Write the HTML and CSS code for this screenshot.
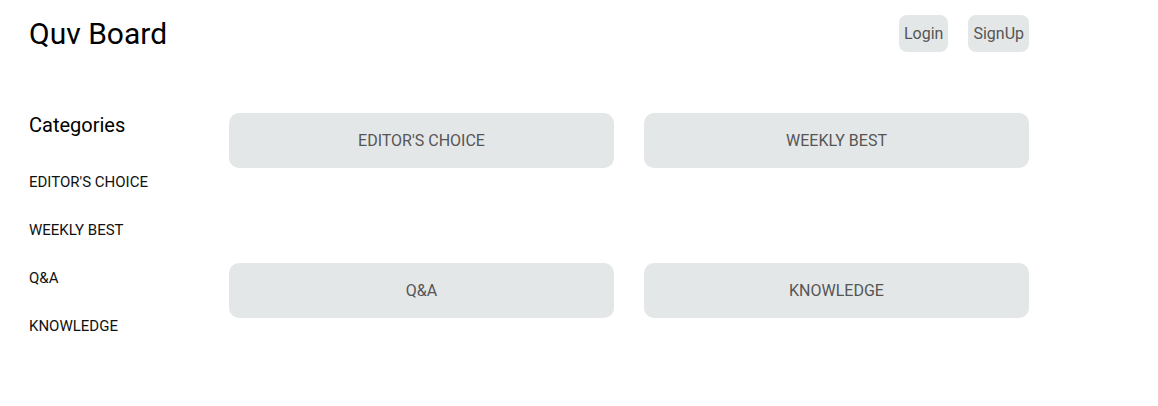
FILE: index.html
```html
<!DOCTYPE html>
<html lang="en">
<head>
<meta charset="utf-8">
<title>Quv Board</title>
<link rel="stylesheet" href="styles.css">
</head>
<body>
<div class="page">
  <header class="header">
    <h1 class="logo">Quv Board</h1>
    <nav class="auth">
      <button class="auth-btn">Login</button>
      <button class="auth-btn">SignUp</button>
    </nav>
  </header>
  <main class="main">
    <aside class="sidebar">
      <h2 class="sidebar-title">Categories</h2>
      <ul class="cat-list">
        <li class="cat-item">EDITOR'S CHOICE</li>
        <li class="cat-item">WEEKLY BEST</li>
        <li class="cat-item">Q&amp;A</li>
        <li class="cat-item">KNOWLEDGE</li>
      </ul>
    </aside>
    <section class="cards">
      <div class="card">EDITOR'S CHOICE</div>
      <div class="card">WEEKLY BEST</div>
      <div class="card">Q&amp;A</div>
      <div class="card">KNOWLEDGE</div>
    </section>
  </main>
</div>
</body>
</html>
```
FILE: styles.css
```css
* { box-sizing: border-box; }
html, body { margin: 0; padding: 0; background: #fff; }
body { font-family: Roboto, "Noto Sans", sans-serif; color: #000; }
.page { width: 1000px; margin-left: 29px; padding-top: 15px; }
.header { display: flex; justify-content: space-between; align-items: center; }
.logo { margin: 0; font-size: 30px; font-weight: 400; line-height: normal; }
.auth { display: flex; gap: 20px; }
.auth-btn {
  font-family: Roboto, sans-serif; font-size: 16px; line-height: normal;
  color: #555; background: #e4e7e8; border: none; border-radius: 8px;
  padding: 9px 5px; height: 37px; cursor: pointer;
}
.main { display: flex; margin-top: 61px; }
.sidebar { width: 200px; flex: none; }
.sidebar-title { margin: 0 0 37px; font-size: 20px; font-weight: 400; line-height: normal; }
.cat-list { list-style: none; margin: 0; padding: 0; display: flex; flex-direction: column; gap: 32px; }
.cat-item { font-size: 15px; line-height: 16px; color: #111; }
.cards { flex: 1; display: grid; grid-template-columns: 385px 385px; column-gap: 30px; row-gap: 95px; align-content: start; }
.card {
  height: 55px; background: #e4e7e8; border-radius: 10px;
  display: flex; align-items: center; justify-content: center;
  font-size: 16px; color: #555;
}
```
